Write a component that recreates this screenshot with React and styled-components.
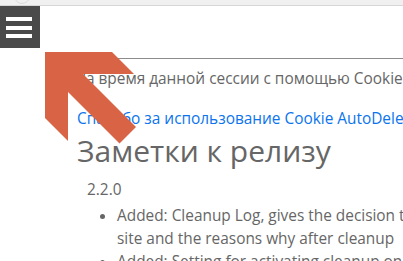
import React from "react";
import styled, { createGlobalStyle } from "styled-components";

const GlobalStyle = createGlobalStyle`
  html, body {
    margin: 0;
    padding: 0;
    background: #ffffff;
    overflow: hidden;
  }
  body {
    font-family: "Open Sans", "Noto Sans", sans-serif;
    color: #666666;
  }
`;

const App = () => {
  return (
    <>
      <GlobalStyle />
      <TopBar>
        <TopDot />
      </TopBar>

      <MenuButton aria-label="menu">
        <Bar />
        <Bar />
        <Bar />
      </MenuButton>

      <Page>
        <Header />
        <Intro>
          За время данной сессии с помощью Cookie AutoDelete было удалено 0 файлов cookie.
        </Intro>
        <ThanksLink href="#">Спасибо за использование Cookie AutoDelete!</ThanksLink>

        <Title>Заметки к релизу</Title>
        <Release>
          <Version>2.2.0</Version>
          <Changes>
            <li>
              Added: Cleanup Log, gives the decision to clean or keep for each
              <br />
              site and the reasons why after cleanup
            </li>
            <li>Added: Setting for activating cleanup on domain change</li>
          </Changes>
        </Release>
      </Page>

      <Pointer viewBox="45 52 92 92" width="92" height="92">
        <polygon
          fill="#d96445"
          points="45,52 112,52 134,74 83,74 136,127 119.5,143.5 68,92 68,141 45,118"
        />
      </Pointer>
    </>
  );
};

const TopBar = styled.div`
  height: 5px;
  background: #f0f0f0;
  border-bottom: 1px solid #d6d6d6;
  position: relative;
  overflow: hidden;
`;

const TopDot = styled.span`
  position: absolute;
  left: 14px;
  top: -12px;
  width: 14px;
  height: 14px;
  border-radius: 50%;
  border: 1px solid #dcdcdc;
`;

const MenuButton = styled.div`
  position: fixed;
  top: 6px;
  left: 0;
  width: 40px;
  height: 42px;
  box-sizing: border-box;
  padding: 11px 8px 0 6px;
  background: #4a4a4a;
  display: flex;
  flex-direction: column;
  gap: 4.5px;
`;

const Bar = styled.span`
  display: block;
  height: 4px;
  background: #ffffff;
`;

const Page = styled.div`
  width: 760px;
  padding-left: 77px;
  font-size: 15.4px;
`;

const Header = styled.div`
  height: 52px;
  border-bottom: 1px solid #8c8c8c;
`;

const Intro = styled.p`
  margin: 10px 0 0;
  line-height: 20px;
`;

const ThanksLink = styled.a`
  display: block;
  margin-top: 20px;
  line-height: 20px;
  color: #0b74ee;
  text-decoration: none;
`;

const Title = styled.h1`
  margin: 4px 0 0;
  font-size: 30px;
  font-weight: 400;
  line-height: 36px;
  color: #666666;
`;

const Release = styled.div`
  padding-left: 10px;
`;

const Version = styled.div`
  margin-top: 11px;
  line-height: 20px;
`;

const Changes = styled.ul`
  margin: 4px 0 0;
  padding-left: 30px;
  line-height: 23px;
`;

const Pointer = styled.svg`
  position: fixed;
  left: 45px;
  top: 52px;
  display: block;
`;

export default App;
